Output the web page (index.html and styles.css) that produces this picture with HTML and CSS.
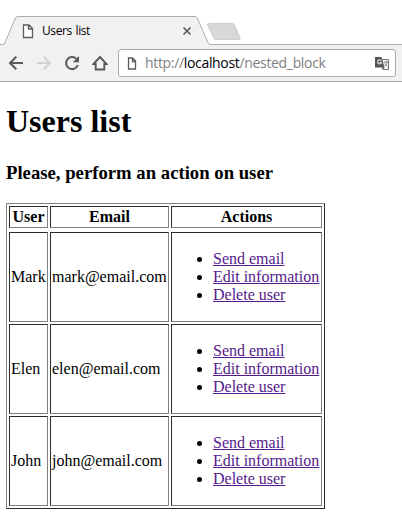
FILE: index.html
```html
<!DOCTYPE html>
<html lang="en">
<head>
<meta charset="utf-8">
<title>Users list</title>
<link rel="stylesheet" href="styles.css">
</head>
<body>
<header class="browser">
  <div class="tabstrip">
    <svg class="tab-shape" width="402" height="46" viewBox="0 0 402 46">
      <path d="M0 44.500H3Q4.300 44.500 4.800 43L15.500 18Q16.200 16.500 18 16.500H195Q196.600 16.500 197.200 18L208 42.500Q208.800 44.500 210.500 44.500H402V46H0Z" fill="#f1f1f1"/>
      <path d="M0 44.500H3Q4.300 44.500 4.800 43L15.500 18Q16.200 16.500 18 16.500H195Q196.600 16.500 197.200 18L208 42.500Q208.800 44.500 210.500 44.500H402" fill="none" stroke="#adadad"/>
      <path d="M208.500 23.500H232.500Q234 23.500 234.600 25L240 38Q240.700 39.500 239 39.500H216Q214.500 39.500 213.800 38L207.600 25Q207 23.500 208.500 23.500Z" fill="#d8d8d8" stroke="#cecece"/>
    </svg>
    <div class="tab">
      <svg class="page-icon" width="12" height="15" viewBox="0 0 12 15"><path d="M1.500 1H7L10.500 4.500V13.500H1.500ZM6.500 1V5H10.500" fill="#fff" stroke="#5a5a5a" stroke-width="1.300"/></svg>
      <span class="tab-title">Users list</span>
      <svg class="close" width="10" height="10" viewBox="0 0 10 10"><path d="M1.500 1.500L8.500 8.500M8.500 1.500L1.500 8.500" stroke="#5a5a5a" stroke-width="1.700"/></svg>
    </div>
  </div>
  <div class="toolbar">
    <svg width="16" height="16" viewBox="0 0 16 16"><path d="M15 8H2.500M8.300 1.700L2 8L8.300 14.300" fill="none" stroke="#5a5a5a" stroke-width="2"/></svg>
    <svg width="16" height="16" viewBox="0 0 16 16"><path d="M1 8H13.500M7.700 1.700L14 8L7.700 14.300" fill="none" stroke="#d2d2d2" stroke-width="2"/></svg>
    <svg width="16" height="16" viewBox="0 0 16 16"><path d="M13.800 10A6 6 0 1 1 12.300 3.800" fill="none" stroke="#5a5a5a" stroke-width="2"/><path d="M15 1V7.200H8.800Z" fill="#5a5a5a"/></svg>
    <svg width="16" height="16" viewBox="0 0 16 16"><path d="M1.500 9L8 2L14.500 9H12.300V14.500H3.700V9Z" fill="none" stroke="#5a5a5a" stroke-width="1.900"/></svg>
    <div class="omnibox">
      <svg width="10" height="13" viewBox="0 0 10 13"><path d="M1.500 1H5.500L8.500 4V12H1.500ZM5.500 1V4.500H8.500" fill="none" stroke="#5a5a5a" stroke-width="1.300"/></svg>
      <span class="url">http://<span class="host">localhost</span>/nested_block</span>
      <svg class="translate" width="15" height="15" viewBox="0 0 15 15"><path d="M6.500 3.500H13.500V13.500H8.500" fill="#f7f7f7" stroke="#737373"/><path d="M0 1H6.500L9.500 11.500H0Z" fill="#555"/><path d="M6.300 4.800A2 2 0 1 0 6.500 6.500H4.500" fill="none" stroke="#ddd" stroke-width="1.200"/><path d="M8.800 6H13M11 5V6M12.300 6Q11.500 9 9.500 10M9.500 7.500L12.500 10.500" fill="none" stroke="#777" stroke-width=".9"/><path d="M6.500 11.500H9.500L8 14Z" fill="#555"/></svg>
    </div>
  </div>
</header>
<main>
  <h1>Users list</h1>
  <h3>Please, perform an action on user</h3>
  <table border="1">
    <colgroup><col class="user"><col class="email"><col class="actions"></colgroup>
    <tr class="head"><th>User</th><th>Email</th><th>Actions</th></tr>
    <tr></tr>
    <tr><td>Mark</td><td>mark@email.com</td><td><ul><li><a href="#">Send email</a></li><li><a href="#">Edit information</a></li><li><a href="#">Delete user</a></li></ul></td></tr>
    <tr><td>Elen</td><td>elen@email.com</td><td><ul><li><a href="#">Send email</a></li><li><a href="#">Edit information</a></li><li><a href="#">Delete user</a></li></ul></td></tr>
    <tr><td>John</td><td>john@email.com</td><td><ul><li><a href="#">Send email</a></li><li><a href="#">Edit information</a></li><li><a href="#">Delete user</a></li></ul></td></tr>
  </table>
</main>
</body>
</html>
```
FILE: styles.css
```css
* { box-sizing: border-box; }
body {
  margin: 0;
  background: #fff;
  color: #000;
  font: 16px/18px "Liberation Serif", serif;
  overflow: hidden;
}
svg { display: block; flex: none; }
.browser { font-family: "Open Sans", "Noto Sans", sans-serif; }
.tabstrip { position: relative; height: 45px; padding: 17px 0 0 22px; }
.tab-shape { position: absolute; left: 0; top: 0; }
.tab { position: relative; display: flex; align-items: center; width: 170px; height: 28px; }
.tab-title { margin-left: 8px; font-size: 12px; letter-spacing: -0.4px; word-spacing: 1px; }
.close { margin-left: auto; }
.toolbar {
  display: flex;
  align-items: center;
  gap: 12px;
  height: 37px;
  padding: 0 6px 0 8px;
  background: #f1f1f1;
  border-bottom: 1px solid #adadad;
}
.omnibox {
  display: flex;
  align-items: center;
  flex: 1;
  height: 28px;
  margin-left: -2px;
  padding: 0 5px 0 8px;
  background: #fff;
  border: 1px solid #acacac;
  border-radius: 3px;
}
.url { margin-left: 8px; font-size: 14px; letter-spacing: -0.33px; color: #808080; white-space: nowrap; }
.host { color: #000; }
.translate { margin-left: auto; }
main { padding: 21px 6px 0; }
h1 { margin: 0; font-size: 32px; line-height: 37px; }
h3 { margin: 22px 0 19px; font-size: 18.72px; line-height: 22px; }
table {
  table-layout: fixed;
  width: 319px;
  border: 1px solid;
  border-color: #808080 #2c2c2c #2c2c2c #808080;
  border-spacing: 2px;
}
.user { width: 39px; }
.email { width: 119px; }
.actions { width: 151px; }
th, td {
  padding: 1px;
  border: 1px solid;
  border-color: #2c2c2c #808080 #808080 #2c2c2c;
  white-space: nowrap;
}
ul { margin: 16px 0; padding-left: 40px; }
a { color: #551a8b; text-decoration: underline; }
```
